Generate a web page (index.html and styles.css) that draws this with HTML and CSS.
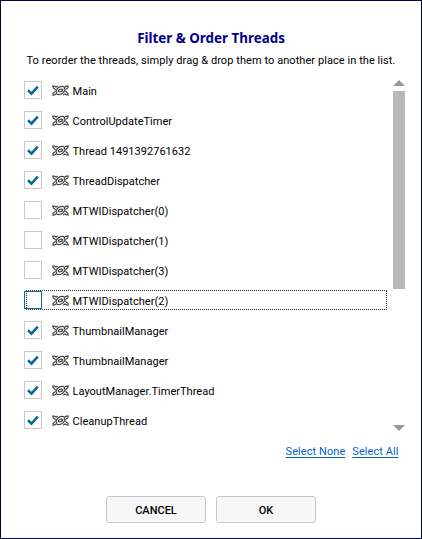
FILE: index.html
```html
<!DOCTYPE html>
<html lang="en">
<head>
<meta charset="utf-8">
<title>Filter &amp; Order Threads</title>
<link rel="stylesheet" href="styles.css">
</head>
<body>
<svg class="defs" aria-hidden="true">
  <symbol id="check" viewBox="0 0 12 11"><path d="M1 5.3 4.5 8.6 10.8 1.6" fill="none" stroke="#046c9c" stroke-width="2.6"/></symbol>
  <symbol id="thread" viewBox="0 0 17 11">
    <g fill="none" stroke="#444" stroke-width="1.2">
      <path d="M3.6 4.8 1.2 2.6 .8 1 2.3 1 4 2.1 5.8 1M13.4 6.2 15.8 8.4 16.2 10 14.7 10 13 8.9 11.2 10"/>
      <path d="M3.6 6.4C5 3.5 7.5 1.2 10.5 1.3 12.5 1.4 13 3 12 4.5M13.4 4.6C12 7.5 9.5 9.8 6.5 9.7 4.5 9.6 4 8 5 6.5"/>
      <path d="M3.6 6.4 1.1 8.4 1 10 2.6 9.8 4.5 8.7M13.4 4.6 15.9 2.6 16 1 14.4 1.2 12.5 2.3"/>
      <path d="M6.3 6C6.8 4.2 10.2 3.4 10.7 5 10.2 6.8 6.8 7.6 6.3 6Z"/>
    </g>
  </symbol>
</svg>
<main class="dialog">
  <h1 class="title">Filter &amp; Order Threads</h1>
  <p class="hint">To reorder the threads, simply drag &amp; drop them to another place in the list.</p>
  <div class="list-area">
    <ul class="list">
      <li class="row"><span class="box"><svg class="check"><use href="#check"/></svg></span><svg class="thread"><use href="#thread"/></svg><span class="name">Main</span></li>
      <li class="row"><span class="box"><svg class="check"><use href="#check"/></svg></span><svg class="thread"><use href="#thread"/></svg><span class="name">ControlUpdateTimer</span></li>
      <li class="row"><span class="box"><svg class="check"><use href="#check"/></svg></span><svg class="thread"><use href="#thread"/></svg><span class="name">Thread 1491392761632</span></li>
      <li class="row"><span class="box"><svg class="check"><use href="#check"/></svg></span><svg class="thread"><use href="#thread"/></svg><span class="name">ThreadDispatcher</span></li>
      <li class="row"><span class="box"></span><svg class="thread"><use href="#thread"/></svg><span class="name">MTWIDispatcher(0)</span></li>
      <li class="row"><span class="box"></span><svg class="thread"><use href="#thread"/></svg><span class="name">MTWIDispatcher(1)</span></li>
      <li class="row"><span class="box"></span><svg class="thread"><use href="#thread"/></svg><span class="name">MTWIDispatcher(3)</span></li>
      <li class="row focused"><span class="box"></span><svg class="thread"><use href="#thread"/></svg><span class="name">MTWIDispatcher(2)</span></li>
      <li class="row"><span class="box"><svg class="check"><use href="#check"/></svg></span><svg class="thread"><use href="#thread"/></svg><span class="name">ThumbnailManager</span></li>
      <li class="row"><span class="box"><svg class="check"><use href="#check"/></svg></span><svg class="thread"><use href="#thread"/></svg><span class="name">ThumbnailManager</span></li>
      <li class="row"><span class="box"><svg class="check"><use href="#check"/></svg></span><svg class="thread"><use href="#thread"/></svg><span class="name">LayoutManager.TimerThread</span></li>
      <li class="row"><span class="box"><svg class="check"><use href="#check"/></svg></span><svg class="thread"><use href="#thread"/></svg><span class="name">CleanupThread</span></li>
    </ul>
    <div class="scrollbar">
      <svg class="arrow" viewBox="0 0 12 6"><path d="M0 6 6 0 12 6Z" fill="#999"/></svg>
      <div class="thumb"></div>
      <svg class="arrow arrow-down" viewBox="0 0 12 6"><path d="M0 0H12L6 6Z" fill="#999"/></svg>
    </div>
  </div>
  <div class="links"><a href="#">Select None</a><a href="#">Select All</a></div>
  <div class="actions"><button>CANCEL</button><button>OK</button></div>
</main>
</body>
</html>
```
FILE: styles.css
```css
* { box-sizing: border-box; }
body { margin: 0; background: #fff; font: 11px/20px Roboto, sans-serif; color: #000; }
.defs { display: none; }
.dialog {
  width: 422px;
  height: 539px;
  border: 1px solid #000740;
  padding-top: 27px;
  display: flex;
  flex-direction: column;
}
.title { margin: 0; font: bold 13.4px/20px "Noto Sans", sans-serif; color: #00008b; text-align: center; }
.hint { margin: 3px 0 0; text-align: center; white-space: nowrap; letter-spacing: 0.065px; }
.list-area { display: flex; justify-content: space-between; margin: 9px 16px 0 23px; height: 352px; }
.list { list-style: none; margin: 0; padding: 0; width: 363px; display: flex; flex-direction: column; gap: 10px; }
.row { display: flex; align-items: center; height: 20px; flex: none; white-space: nowrap; position: relative; }
.box { width: 18px; height: 18px; border: 1px solid #c8c8c8; display: flex; align-items: center; justify-content: center; }
.check { width: 12px; height: 11px; }
.thread { width: 17px; height: 11px; margin: 0 3.5px 0 10px; }
.name { padding-top: 3px; letter-spacing: 0.03px; }
.focused .box { border-color: #046c9c; }
.focused::after { content: ""; position: absolute; inset: 0 0 0 2px; border: 1px dotted #333; }
.scrollbar { width: 12px; display: flex; flex-direction: column; }
.arrow { width: 12px; height: 6px; flex: none; }
.thumb { height: 198px; margin-top: 5px; background: #b8b8b8; }
.arrow-down { margin-top: auto; margin-bottom: 1px; }
.links { display: flex; justify-content: flex-end; gap: 7px; margin: 10px 22.5px 0 0; letter-spacing: 0.07px; }
.links a { color: #0563c7; text-decoration: underline; text-underline-offset: 2px; }
.actions { display: flex; justify-content: center; gap: 10px; margin-top: 34px; }
.actions button { width: 100px; height: 27px; border: 1px solid #c8c8c8; border-radius: 3px; background: #f7f7f7; color: #000; font: 500 11px/20px Roboto, sans-serif; padding: 2px 0 0; }
```
